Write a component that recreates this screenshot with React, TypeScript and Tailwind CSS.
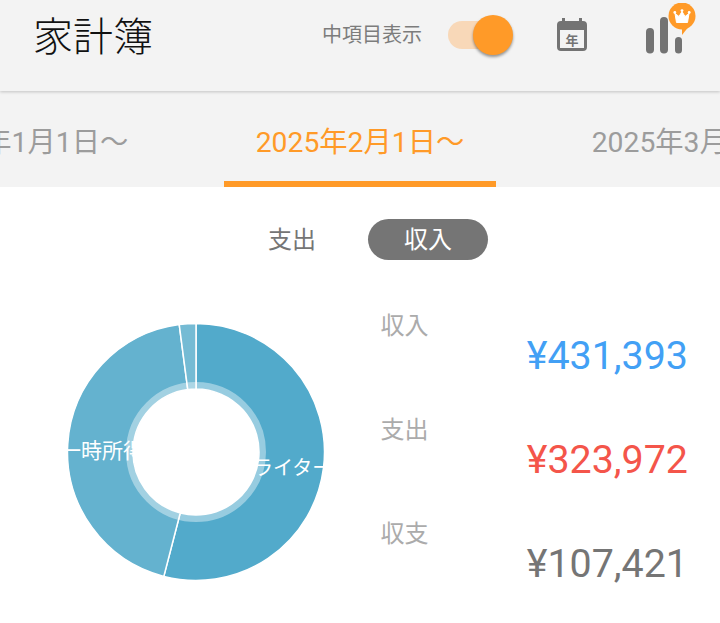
const FONT = "font-['Roboto','Noto_Sans_CJK_JP',sans-serif]";

function polar(r: number, deg: number) {
  const a = (deg * Math.PI) / 180;
  return [129 + r * Math.sin(a), 129 - r * Math.cos(a)];
}

function slice(a0: number, a1: number, r: number, ri: number) {
  const [x0, y0] = polar(r, a0);
  const [x1, y1] = polar(r, a1);
  const [x2, y2] = polar(ri, a1);
  const [x3, y3] = polar(ri, a0);
  const large = a1 - a0 > 180 ? 1 : 0;
  return `M${x0} ${y0}A${r} ${r} 0 ${large} 1 ${x1} ${y1}L${x2} ${y2}A${ri} ${ri} 0 ${large} 0 ${x3} ${y3}Z`;
}

function Donut() {
  const segs: [number, number, string][] = [
    [0, 194.5, "#52aacb"],
    [194.5, 352.5, "#64b2cf"],
    [352.5, 360, "#75bbd4"],
  ];
  return (
    <svg width="258" height="258" viewBox="0 0 258 258" className="shrink-0">
      {segs.map(([a, b, c]) => (
        <path key={a} d={slice(a, b, 128.5, 63)} fill={c} stroke="#fff" strokeWidth="1.5" />
      ))}
      <circle cx="129" cy="129" r="66.5" fill="none" stroke="#fff" strokeOpacity="0.4" strokeWidth="7" />
      <text x="-7" y="135" fontSize="21" fill="#fff">一時所得</text>
      <text x="186" y="152" fontSize="20" fill="#fff">ライター</text>
    </svg>
  );
}

function CalendarIcon() {
  return (
    <svg width="32" height="36" viewBox="0 0 32 36" className="shrink-0">
      <path d="M6 1h3v3h14v-3h3v3h1a4 4 0 0 1 4 4v22a4 4 0 0 1-4 4h-22a4 4 0 0 1-4-4v-22a4 4 0 0 1 4-4h1z" fill="#737373" />
      <rect x="4" y="13" width="24" height="18" fill="#f3f3f3" />
      <text x="16" y="27.500" fontSize="13" fontWeight="700" fill="#737373" textAnchor="middle">年</text>
    </svg>
  );
}

function ChartIcon() {
  return (
    <svg width="54" height="54" viewBox="0 0 54 54" className="shrink-0">
      <rect x="2" y="25" width="8" height="25.500" rx="4" fill="#737373" />
      <rect x="16" y="14" width="8" height="36.500" rx="4" fill="#737373" />
      <rect x="31" y="34" width="7" height="16.500" rx="3.500" fill="#737373" />
      <circle cx="38" cy="13" r="13.500" fill="#ff9a28" />
      <path d="M38 32 L38 24 L46 22 Z" fill="#ff9a28" />
      <path d="M31 10.500 L35 13.500 L38 8.500 L41 13.500 L45 10.500 L43.500 19.500 L32.500 19.500 Z" fill="#fff" stroke="#fff" strokeWidth="1" strokeLinejoin="round" />
      <circle cx="30.800" cy="9.500" r="1.400" fill="#fff" />
      <circle cx="38" cy="7.600" r="1.400" fill="#fff" />
      <circle cx="45.200" cy="9.500" r="1.400" fill="#fff" />
    </svg>
  );
}

function Stat({ label, value, color }: { label: string; value: string; color: string }) {
  return (
    <div className="h-[104px] flex flex-col">
      <div className="h-[42px] flex items-center text-[24px] leading-none text-[#ababab]">{label}</div>
      <div className={`h-[18px] flex items-center justify-end text-[39.400px] leading-none ${color}`}>{value}</div>
    </div>
  );
}

export default function App() {
  return (
    <div className={`${FONT} w-[720px] h-[623px] overflow-hidden bg-white flex flex-col`}>
      <header className="relative z-10 h-[91px] shrink-0 bg-[#f3f3f3] shadow-[0_1px_3px_rgba(0,0,0,0.2)] flex items-start pl-[33px] pt-[12px]">
        <h1 className="text-[40px] leading-[52px] font-light text-[#111111] w-[289px] shrink-0">家計簿</h1>
        <span className="text-[20px] leading-[46px] text-[#7c7c7c] w-[126px] shrink-0">中項目表示</span>
        <div className="relative w-[60px] h-[28px] mt-[9px] shrink-0 rounded-full bg-[#f8d8b8]">
          <div className="absolute left-[25px] top-[-6px] w-[40px] h-[40px] rounded-full bg-[#ff9a28] shadow-[0_2px_3px_rgba(0,0,0,0.4)]"></div>
        </div>
        <div className="ml-[48px] mt-[5px] shrink-0"><CalendarIcon /></div>
        <div className="ml-[56px] mt-[-9px] shrink-0"><ChartIcon /></div>
      </header>

      <nav className="h-[96px] shrink-0 bg-[#f3f3f3] flex justify-center overflow-hidden">
        {["2025年1月1日〜", "2025年2月1日〜", "2025年3月1日〜"].map((t, i) => (
          <div key={t} className="w-[336px] shrink-0 flex flex-col items-center">
            <div className={`h-[90px] pt-[14px] flex items-center text-[28.300px] leading-none whitespace-nowrap ${i === 1 ? "text-[#ff9a28]" : "text-[#9c9c9c]"}`}>{t}</div>
            <div className={`w-[272px] h-[6px] ${i === 1 ? "bg-[#ff9a28]" : ""}`}></div>
          </div>
        ))}
      </nav>

      <div className="h-[41px] mt-[32px] shrink-0 flex items-center pl-[268px] text-[24px] leading-none">
        <span className="text-[#757575] w-[100px]">支出</span>
        <span className="w-[120px] h-[41px] rounded-full bg-[#757575] text-white flex items-center justify-center">収入</span>
      </div>

      <div className="flex mt-[45px] pl-[67px]">
        <div className="mt-[18px]"><Donut /></div>
        <div className="ml-[55.500px] w-[307.500px]">
          <Stat label="収入" value="¥431,393" color="text-[#42a0f5]" />
          <Stat label="支出" value="¥323,972" color="text-[#f4554a]" />
          <Stat label="収支" value="¥107,421" color="text-[#757575]" />
        </div>
      </div>
    </div>
  );
}
